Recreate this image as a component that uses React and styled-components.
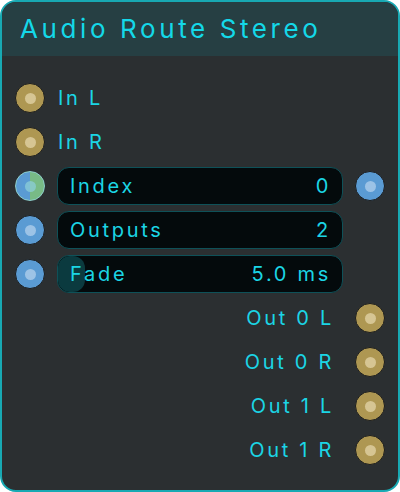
import React from "react";
import styled, { createGlobalStyle } from "styled-components";

const Global = createGlobalStyle`
  html, body { margin: 0; padding: 0; background: #ffffff; }
  * { box-sizing: border-box; }
`;

const Node = styled.div`
  width: 400px;
  height: 492px;
  border: 2px solid #18a9b3;
  border-radius: 16px;
  background: #2b2f31;
  overflow: hidden;
  font-family: Inter, "Open Sans", sans-serif;
  color: #1bd5e5;
  display: flex;
  flex-direction: column;
`;

const Header = styled.div`
  height: 54px;
  flex: none;
  background: #263f43;
  display: flex;
  align-items: center;
  padding-left: 18px;
  font-size: 26px;
  letter-spacing: 3.6px;
  color: #14d8e8;
  padding-bottom: 2px;
`;

const Body = styled.div`
  flex: 1;
  padding: 20px 13px 0 13px;
  display: flex;
  flex-direction: column;
`;

const Row = styled.div`
  height: 44px;
  display: grid;
  grid-template-columns: 30px 1fr 30px;
  column-gap: 12px;
  align-items: center;
`;

const colors = {
  gold: { bg: "#ae9752", dot: "#d6c593" },
  blue: { bg: "#5a9bd3", dot: "#9cc3e6" },
};

const Port = styled.div`
  width: 30px;
  height: 30px;
  border-radius: 50%;
  border: 1.5px solid ${(p) => (p.$mixed ? "#8ed0cc" : "#1b1d1e")};
  background: ${(p) =>
    p.$mixed
      ? "linear-gradient(90deg, #5a9bd3 50%, #78bb86 50%)"
      : colors[p.$kind].bg};
  display: flex;
  align-items: center;
  justify-content: center;
  grid-column: ${(p) => (p.$side === "right" ? 3 : 1)};
  &::after {
    content: "";
    width: 11px;
    height: 11px;
    border-radius: 50%;
    background: ${(p) =>
      p.$mixed ? "rgba(140, 205, 215, 0.75)" : colors[p.$kind].dot};
  }
`;

const Label = styled.div`
  grid-column: 2;
  font-size: 20px;
  letter-spacing: 2.7px;
  text-align: ${(p) => (p.$right ? "right" : "left")};
  padding: ${(p) => (p.$right ? "0 9px 0 0" : "0 0 0 1px")};
  white-space: nowrap;
`;

const Widget = styled.div`
  grid-column: 2;
  position: relative;
  height: 38px;
  border-radius: 12px;
  border: 1px solid #0e5158;
  background: #040a0c;
  display: flex;
  align-items: center;
  justify-content: space-between;
  padding: 0 11px 0 12px;
  font-size: 20px;
  letter-spacing: 2.7px;
  overflow: hidden;
`;

const Fill = styled.div`
  position: absolute;
  left: 0;
  top: 0;
  bottom: 0;
  border-radius: 12px;
  background: #0b3a3f;
`;

const WText = styled.span`
  position: relative;
  white-space: nowrap;
`;

function WidgetRow({ label, value, fill, mixed, rightPort }) {
  return (
    <Row>
      <Port $kind="blue" $mixed={mixed} />
      <Widget>
        {fill ? <Fill style={{ width: fill }} /> : null}
        <WText>{label}</WText>
        <WText>{value}</WText>
      </Widget>
      {rightPort ? <Port $kind="blue" $side="right" /> : null}
    </Row>
  );
}

export default function App() {
  return (
    <>
      <Global />
      <Node>
        <Header>Audio Route Stereo</Header>
        <Body>
          <Row>
            <Port $kind="gold" />
            <Label>In L</Label>
          </Row>
          <Row>
            <Port $kind="gold" />
            <Label>In R</Label>
          </Row>
          <WidgetRow label="Index" value="0" mixed rightPort />
          <WidgetRow label="Outputs" value="2" />
          <WidgetRow label="Fade" value="5.0 ms" fill="27px" />
          {["Out 0 L", "Out 0 R", "Out 1 L", "Out 1 R"].map((t) => (
            <Row key={t}>
              <Label $right>{t}</Label>
              <Port $kind="gold" $side="right" />
            </Row>
          ))}
        </Body>
      </Node>
    </>
  );
}
